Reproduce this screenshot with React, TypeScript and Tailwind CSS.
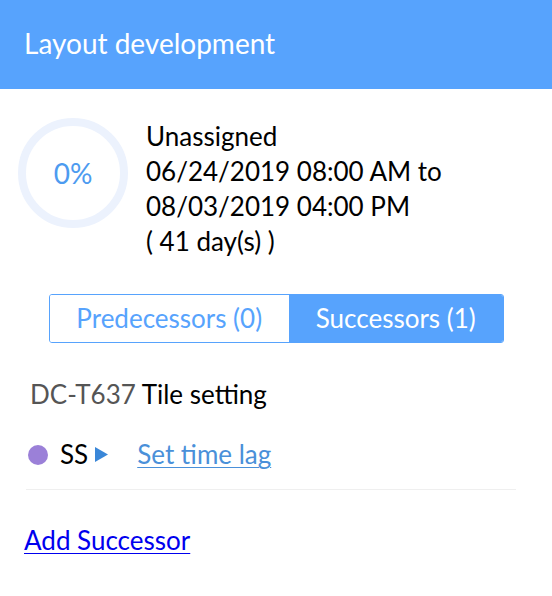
export default function App() {
  return (
    <div
      className="w-[552px] h-[596px] bg-white overflow-hidden"
      style={{ fontFamily: "Lato, 'Noto Sans', sans-serif" }}
    >
      {/* Header */}
      <div className="h-[89px] bg-[#57a3fd] flex items-center px-6">
        <h1 className="text-[28px] text-white leading-none pb-1">Layout development</h1>
      </div>

      {/* Summary */}
      <div className="flex items-start pt-[28px] pl-[18px]">
        <div className="w-[110px] h-[110px] rounded-full border-[8px] border-[#ecf2fd] flex items-center justify-center shrink-0 mt-[1px]">
          <span className="text-[28px] text-[#4d9bf0]">0%</span>
        </div>
        <div className="ml-[18px] text-[26px] leading-[35px] text-black mt-[2px]">
          <div>Unassigned</div>
          <div>06/24/2019 08:00 AM to</div>
          <div>08/03/2019 04:00 PM</div>
          <div>( 41 day(s) )</div>
        </div>
      </div>

      {/* Tabs */}
      <div className="flex justify-center mt-[35px]">
        <div className="flex w-[455px] h-[49px] border border-[#57a3fd] rounded-[3px] overflow-hidden text-[26px]">
          <button className="flex-auto bg-white text-[#57a3fd] flex items-center justify-center">
            Predecessors (0)
          </button>
          <button className="flex-auto bg-[#57a3fd] text-white flex items-center justify-center">
            Successors (1)
          </button>
        </div>
      </div>

      {/* Successor item */}
      <div className="px-[26px] mt-[34px]">
        <div className="text-[26px] leading-[35px] pl-[4px]">
          <span className="text-[#555]">DC-T637</span>{" "}
          <span className="text-black">Tile setting</span>
        </div>
        <div className="flex items-center mt-[25px] text-[26px] leading-[35px]">
          <span className="w-[20px] h-[20px] rounded-full bg-[#9b80d8] ml-[2px]" />
          <span className="ml-[12px] text-black">SS</span>
          <svg width="13" height="15" viewBox="0 0 13 15" className="ml-[7px]">
            <polygon points="0,0 13,7.5 0,15" fill="#3a87d8" />
          </svg>
          <a href="#" className="ml-[29px] text-[#4a90d9] underline underline-offset-[3px] decoration-1">
            Set time lag
          </a>
        </div>
        <div className="mt-[17px] h-px bg-[#efefef] w-[490px]" />
      </div>

      <div className="px-6 mt-[33px] text-[26px] leading-[35px]">
        <a href="#" className="text-[#0000ee] underline underline-offset-[3px] decoration-1">
          Add Successor
        </a>
      </div>
    </div>
  );
}
